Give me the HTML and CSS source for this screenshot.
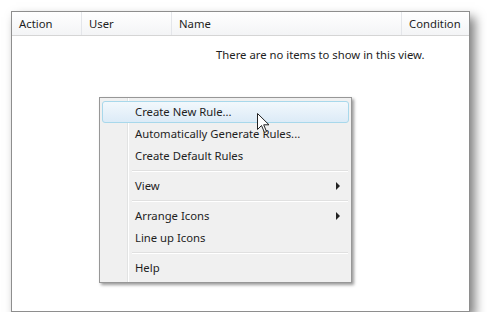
FILE: index.html
```html
<!DOCTYPE html>
<html>
<head>
    <title>Rules</title>
    <link rel="stylesheet" href="styles.css">
</head>
<body>
    <div class="window">
        <div class="list-header">
            <div class="col">Action</div>
            <div class="col">User</div>
            <div class="col">Name</div>
            <div class="col last">Condition</div>
        </div>
        <div class="list-body">
            <p class="empty">There are no items to show in this view.</p>
        </div>
    </div>

    <div class="menu">
        <div class="item active">Create New Rule...</div>
        <div class="item">Automatically Generate Rules...</div>
        <div class="item">Create Default Rules</div>
        <div class="sep"></div>
        <div class="item sub">View</div>
        <div class="sep"></div>
        <div class="item sub">Arrange Icons</div>
        <div class="item">Line up Icons</div>
        <div class="sep"></div>
        <div class="item">Help</div>
    </div>

    <svg class="cursor" width="13" height="21" viewBox="0 0 13 21">
        <path d="M0.5 0.5 L0.5 16.5 L4.5 12.5 L7.5 19.5 L9.5 18.5 L6.7 11.8 L12 11.8 Z" fill="#fff" stroke="#222" stroke-width="1"/>
    </svg>
</body>
</html>
```

FILE: styles.css
```css
body {
    margin: 0;
    background: #fff;
    font-family: "Noto Sans", "Open Sans", sans-serif;
    font-size: 11.3px;
    color: #1e1e1e;
}
.window {
    margin: 11px 0 0 11px;
    width: 457px;
    height: 299px;
    border: 1px solid #8e8e8e;
    background: #fff;
    box-shadow: 5px 6px 10px rgba(0,0,0,0.5);
    display: flex;
    flex-direction: column;
}
.list-header {
    display: grid;
    grid-template-columns: 70px 90px 230px 1fr;
    height: 23px;
    background: linear-gradient(#ffffff, #f3f4f6);
    border-bottom: 1px solid #d5d5d5;
}
.col {
    padding-left: 7px;
    line-height: 23px;
    border-right: 1px solid #e4e6ea;
}
.col.last {
    border-right: none;
}
.list-body {
    flex: 1;
}
.empty {
    margin: 11px 0 0 204px;
}
.menu {
    position: absolute;
    left: 99px;
    top: 97px;
    width: 245px;
    padding: 3px;
    border: 1px solid #979797;
    background: linear-gradient(to right, #f0f0f0 27px, #e2e3e3 27px, #e2e3e3 28px, #fff 28px, #fff 29px, #f0f0f0 29px);
    box-shadow: 2px 2px 3px rgba(0,0,0,0.4);
}
.item {
    position: relative;
    height: 20px;
    line-height: 20px;
    padding-left: 32px;
    border: 1px solid transparent;
    border-radius: 3px;
    margin: 0 -1px;
}
.item.active {
    border-color: #a8d8eb;
    background: linear-gradient(#f2f8fc, #dcebf7);
}
.item.sub::after {
    content: "";
    position: absolute;
    right: 8px;
    top: 6px;
    border-left: 4px solid #222;
    border-top: 4px solid transparent;
    border-bottom: 4px solid transparent;
}
.sep {
    height: 1px;
    margin: 3px 0 3px 29px;
    background: #e0e0e0;
    border-bottom: 1px solid #fff;
}
.cursor {
    position: absolute;
    left: 257px;
    top: 113px;
}
```
